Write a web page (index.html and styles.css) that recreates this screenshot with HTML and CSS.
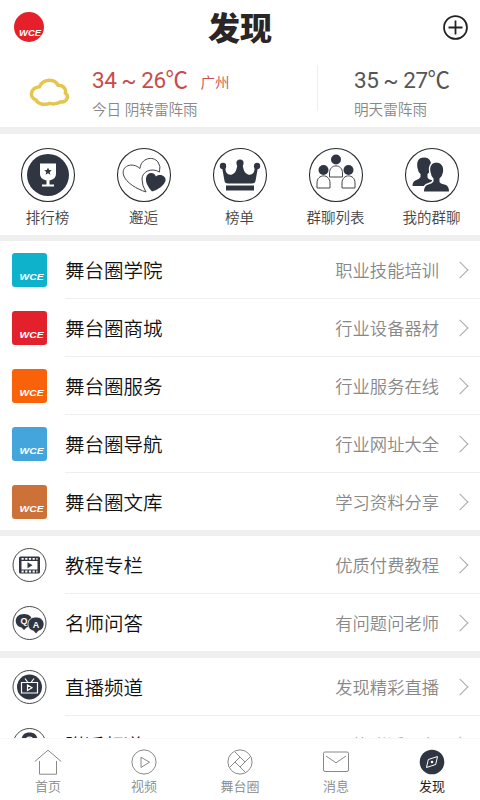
FILE: index.html
```html
<!DOCTYPE html>
<html lang="zh-CN">
<head>
<meta charset="utf-8">
<title>发现</title>
<link rel="stylesheet" href="styles.css">
</head>
<body>
<div class="app">
  <header class="header">
    <svg class="avatar" viewBox="0 0 30 30"><circle cx="15" cy="15" r="15" fill="#e5202a"/><text class="mark" x="5" y="23.500" textLength="22" lengthAdjust="spacingAndGlyphs">WCE</text></svg>
    <h1>发现</h1>
    <svg class="add" viewBox="0 0 24 24"><circle cx="12" cy="12" r="11"/><path d="M12 5.3v13.4M5.3 12h13.4"/></svg>
  </header>
  <section class="weather">
    <svg class="cloud" viewBox="0 0 40 28"><path d="M7 22.500C0 20 1 10.500 10 9.500C14 1 25 1 28.500 8C34 8 36.500 12 35.500 15.500C40 19 36 25 31 24C27 26.500 22 26.500 20 25.500C15 27.500 9 26.500 7 22.500Z"/></svg>
    <div class="today"><div class="temp">34 ~ 26℃<span>广州</span></div><p>今日 阴转雷阵雨</p></div>
    <div class="tomorrow"><div class="temp">35 ~ 27℃</div><p>明天雷阵雨</p></div>
  </section>
  <nav class="shortcuts">
    <a><svg viewBox="0 0 56 56"><circle class="ring" cx="28" cy="28" r="26.500"/><circle class="dark" cx="28" cy="28" r="21"/><path fill="#fff" d="M20 16.500h16v10.500q0 5-6.500 6.500v4h4.500v2H22v-2h4.500v-4Q20 32 20 27z"/><path class="dark" d="m28 20.500 1.100 2.600 2.700.2-2.100 1.700.7 2.700-2.400-1.500-2.400 1.500.7-2.700-2.100-1.700 2.700-.2z"/></svg><span>排行榜</span></a>
    <a><svg viewBox="0 0 56 56"><circle class="ring" cx="28" cy="28" r="26.500"/><path class="line" d="M30 45C21 42 10 36 7.500 28C5 19 16 14.500 24 21.500C25 11 37 8.500 42 15Q45 19 43.500 25C35 20 26 25 26 32Q26 39 30 45Z"/><path class="dark" d="M36 44.500Q29 37 30 31C31 25 38 24.500 40 29.500C44 26 50.500 29 49.500 34Q47 41 36 44.500Z"/></svg><span>邂逅</span></a>
    <a><svg viewBox="0 0 56 56"><circle class="ring" cx="28" cy="28" r="26.500"/><path class="dark" d="M10 20L13.500 20C13 26 16 28.500 20 27.500Q25 26 25.500 16h5Q31 26 36 27.500C40 28.500 43 26 42.500 20L46 20L43.500 34Q43 36.500 40 36.500H16Q13 36.500 12.500 34Z"/><circle class="dark" cx="11" cy="19" r="3.200"/><circle class="dark" cx="28" cy="16" r="3.600"/><circle class="dark" cx="45" cy="19" r="3.200"/><path class="dark" d="M14 38.500h28v5H14z"/></svg><span>榜单</span></a>
    <a><svg viewBox="0 0 56 56"><circle class="ring" cx="28" cy="28" r="26.500"/><g class="dark"><circle cx="28" cy="12.500" r="5"/><circle cx="15.500" cy="23" r="5"/><circle cx="40.500" cy="23" r="5"/></g><path class="line" d="M21.500 30v-4C21.500 16.500 34.500 16.500 34.500 26v4zM9 41v-5C9 26.500 22 26.500 22 36v5zM34 41v-5c0-9.500 13-9.500 13 0v5z"/></svg><span>群聊列表</span></a>
    <a><svg viewBox="0 0 56 56"><circle class="ring" cx="28" cy="28" r="26.500"/><path class="dark" d="M20 10.500C14 10.500 12.500 15 13.500 21Q14 25 16.500 27v3q-1 2-4 3-4 1-4 6h23q0-5-4-6t-4-3v-3q3-2 3.500-6c1-6-1.500-10.500-6.500-10.500z"/><path class="dark cutout" d="M33 15.500C27 15.500 25.500 20 26.500 25Q27 29 29.500 31.500v3q-1 2-5 3-4.500 1-4.500 7h25q0-6-4.500-7-5-1-5-3v-3q3-2.500 3.500-6.500c1-5-1.500-9.500-7-9.500z"/></svg><span>我的群聊</span></a>
  </nav>
  <main class="groups">
    <section>
      <a class="row"><span class="badge teal"><svg viewBox="0 0 34 34"><text class="mark" x="7" y="26.500" textLength="24" lengthAdjust="spacingAndGlyphs">WCE</text></svg></span><b>舞台圈学院</b><em>职业技能培训</em><i></i></a>
      <a class="row"><span class="badge red"><svg viewBox="0 0 34 34"><text class="mark" x="7" y="26.500" textLength="24" lengthAdjust="spacingAndGlyphs">WCE</text></svg></span><b>舞台圈商城</b><em>行业设备器材</em><i></i></a>
      <a class="row"><span class="badge orange"><svg viewBox="0 0 34 34"><text class="mark" x="7" y="26.500" textLength="24" lengthAdjust="spacingAndGlyphs">WCE</text></svg></span><b>舞台圈服务</b><em>行业服务在线</em><i></i></a>
      <a class="row"><span class="badge blue"><svg viewBox="0 0 34 34"><text class="mark" x="7" y="26.500" textLength="24" lengthAdjust="spacingAndGlyphs">WCE</text></svg></span><b>舞台圈导航</b><em>行业网址大全</em><i></i></a>
      <a class="row"><span class="badge brown"><svg viewBox="0 0 34 34"><text class="mark" x="7" y="26.500" textLength="24" lengthAdjust="spacingAndGlyphs">WCE</text></svg></span><b>舞台圈文库</b><em>学习资料分享</em><i></i></a>
    </section>
    <section>
      <a class="row"><span class="badge"><svg viewBox="0 0 34 34"><circle class="thin" cx="17" cy="17" r="16.500"/><rect class="dark" x="6.500" y="8.500" width="21" height="17" rx="1.500"/><path fill="#fff" d="M9 13h16v8.500H9z"/><path stroke="#fff" stroke-width="1.800" stroke-dasharray="2.200 1.500" d="M9 10.800h16M9 23.500h16"/><path class="dark" d="m15 14.200 5 3-5 3z"/></svg></span><b>教程专栏</b><em>优质付费教程</em><i></i></a>
      <a class="row"><span class="badge"><svg viewBox="0 0 34 34"><circle class="thin" cx="17" cy="17" r="16.500"/><path class="dark" d="M11.500 8c10.500 0 10.500 12 2.500 13.500L11.500 24 9 21.500C1 20 1 8 11.500 8z"/><path class="dark" stroke="#fff" stroke-width=".8" d="M23.500 11c10 0 10.500 12.500 2.500 14L23.500 28l-2.500-3c-8-1.500-7.500-14 2.500-14z"/><text class="qa" x="8" y="18">Q</text><text class="qa" x="20.300" y="22">A</text></svg></span><b>名师问答</b><em>有问题问老师</em><i></i></a>
    </section>
    <section>
      <a class="row"><span class="badge"><svg viewBox="0 0 34 34"><circle class="thin" cx="17" cy="17" r="16.500"/><circle class="dark" cx="17" cy="17" r="12.500"/><path class="tv" d="M9 12.500h16v10.500H9zM12.500 8.500l3 4M21.500 8.500l-3 4M15 15l4.500 2.700L15 20.500z"/></svg></span><b>直播频道</b><em>发现精彩直播</em><i></i></a>
      <a class="row"><span class="badge"><svg viewBox="0 0 34 34"><circle class="thin" cx="17" cy="17" r="16.500"/><path class="dark" d="M17 4.500c-11 0-10 13 0 24 10-11 11-24 0-24z"/><circle cx="17" cy="13" r="4.500" fill="#fff"/><circle class="dark" cx="17" cy="12.500" r="2.800"/></svg></span><b>附近频道</b><em>寻找附近朋友</em><i></i></a>
    </section>
  </main>
  <nav class="tabs">
    <a><svg viewBox="0 0 28 26"><path d="M.8 12.500 14 1.200l13.200 11.300M5.500 12v13.200h17V12"/></svg><span>首页</span></a>
    <a><svg viewBox="0 0 28 26"><circle cx="14" cy="13" r="12.100"/><path d="m11 8.200 8.500 5-8.500 5.300z"/></svg><span>视频</span></a>
    <a><svg viewBox="0 0 28 26"><circle cx="14" cy="13" r="12.100"/><path d="M9 3 19 13M24.500 7.500 14 18M19 23 9 13M3.500 18.500 14 8M9 13l5-5 5 5-5 5z"/></svg><span>舞台圈</span></a>
    <a><svg viewBox="0 0 28 26"><rect x="1.500" y="3" width="25" height="19.500" rx="1.500"/><path d="m4 7 10 6.800L24 7"/></svg><span>消息</span></a>
    <a class="active"><svg viewBox="0 0 28 26"><circle class="dark" cx="14" cy="13" r="12.300"/><path class="needle" d="m19.500 7.500-1.800 8-9.200 3 1.800-8z"/><circle class="dot" cx="14" cy="13" r="1.300"/></svg><span>发现</span></a>
  </nav>
</div>
</body>
</html>
```
FILE: styles.css
```css
* { box-sizing: border-box; }
body {
  margin: 0;
  background: #fff;
  font-family: Roboto, "Noto Sans CJK SC", sans-serif;
  color: #222;
}
svg { display: block; fill: none; }
p, h1 { margin: 0; }
.app { display: flex; flex-direction: column; width: 480px; height: 800px; overflow: hidden; }

.header { flex: none; height: 54px; padding: 0 12px 0 14px; display: flex; align-items: center; justify-content: space-between; }
.avatar { width: 30px; height: 30px; }
.header h1 { font: 900 32px/52px "Noto Sans CJK SC", sans-serif; color: #2a2526; height: 54px; padding-right: 7px; }
.add { width: 25px; height: 25px; stroke: #222; stroke-width: 1.7; }
.mark { fill: #fff; font: italic bold 8.5px "Liberation Sans", sans-serif; }

.weather { flex: none; height: 73px; display: flex; align-items: flex-start; padding: 11px 0 0 29px; }
.cloud { width: 41px; height: 29px; margin: 12px 22px 0 0; stroke: #e6c54f; stroke-width: 3.4; }
.today { width: 226px; height: 46px; border-right: 1px solid #eee; color: #c94b4b; }
.tomorrow { padding-left: 36px; color: #555; }
.temp { font-size: 22.5px; line-height: 30px; height: 30px; white-space: nowrap; letter-spacing: -.5px; }
.temp span { font-size: 14.5px; margin-left: 13px; letter-spacing: 0; font-weight: 350; }
.weather p { font-size: 14.6px; line-height: 20px; margin-top: 5px; color: #888; font-weight: 350; }

.shortcuts { flex: none; height: 114px; border: solid #efefef; border-width: 7px 0 6px; display: grid; grid-template-columns: repeat(5, 96px); padding-top: 13px; }
.shortcuts a { display: flex; flex-direction: column; align-items: center; padding-right: 1px; }
.shortcuts svg { width: 56px; height: 56px; }
.shortcuts span { font-size: 14.500px; line-height: 20px; margin-top: 6px; color: #444; font-weight: 350; }
.dark { fill: #303641; }
.cutout { stroke: #fff; stroke-width: 3; paint-order: stroke; }
.ring { stroke: #292c31; stroke-width: 1.1; }
.thin { stroke: #333; stroke-width: .9; }
.line { stroke: #444; stroke-width: 1; }
.qa { font: bold 9px "Liberation Sans", sans-serif; fill: #fff; }
.tv { stroke: #fff; stroke-width: 1.2; }

.groups { flex: 1; min-height: 0; overflow: hidden; }
.groups section + section { border-top: 6px solid #efefef; }
.groups section:last-child { border-top-width: 7px; }
.row { height: 58px; display: grid; grid-template-columns: 53px 1fr auto 41px; align-items: center; padding: 0 0 1px 12px; position: relative; }
.row:last-child { height: 57px; padding-bottom: 0; }
.row:not(:last-child)::after { content: ""; position: absolute; left: 65px; right: 0; bottom: 0; height: 1px; background: #eee; }
.badge { width: 35px; height: 34px; border-radius: 3px; }
.badge svg { width: 35px; height: 34px; }
.teal { background: #0eb3cb; }
.red { background: #e3212d; }
.orange { background: #f96208; }
.blue { background: #43a5dc; }
.brown { background: #cc7138; }
.row b, .row em { padding-bottom: 1px; }
.row b { font-size: 19.500px; font-weight: 350; color: #111; }
.row em { font-size: 17.300px; font-style: normal; font-weight: 350; color: #888; }
.row i { width: 12px; height: 12px; border: solid #aaa; border-width: 1.200px 1.200px 0 0; transform: rotate(45deg); margin-left: 15px; }

.tabs { flex: none; height: 62px; background: #fff; border-top: 1px solid #f7f7f7; display: grid; grid-template-columns: repeat(5, 96px); padding-top: 10px; }
.tabs a { display: flex; flex-direction: column; align-items: center; color: #888; }
.tabs svg { width: 28px; height: 26px; stroke: #888; stroke-width: 1; }
.tabs span { font-size: 13px; line-height: 18px; margin-top: 3px; font-weight: 350; }
.tabs .active { color: #222; }
.tabs .active span { font-weight: 400; }
.tabs .dark { stroke: none; }
.tabs .needle { stroke: #fff; }
.tabs .dot { fill: #fff; stroke: none; }
```
